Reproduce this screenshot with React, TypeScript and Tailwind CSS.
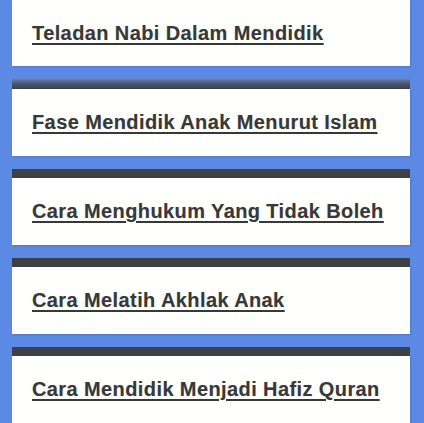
import React from "react";

const titles = [
  "Teladan Nabi Dalam Mendidik",
  "Fase Mendidik Anak Menurut Islam",
  "Cara Menghukum Yang Tidak Boleh",
  "Cara Melatih Akhlak Anak",
  "Cara Mendidik Menjadi Hafiz Quran",
];

function Card({ title, index }: { title: string; index: number }) {
  return (
    <div className={`flex flex-col ${index === 1 ? "-mt-[1px]" : ""}`}>
      {index === 1 && (
        <div className="h-[11px] bg-gradient-to-b from-[#6a8ad0] via-[#4a5670] to-[#3c4046]" />
      )}
      {index > 1 && <div className="h-[9px] bg-[#3d4146]" />}
      <div
        className={`flex items-center bg-[#fffffd] px-5 pb-[1px] shadow-[1px_1px_2px_rgba(0,0,0,0.12)] ${
          index === 0 ? "h-[66px]" : "h-[67px]"
        }`}
      >
        <a
          href="#"
          className="text-[20px] font-bold leading-none tracking-[0.4px] text-[#383838] underline decoration-[1.5px] underline-offset-[3px] [text-shadow:0_0_1px_rgba(0,0,0,0.2)]"
          style={{ fontFamily: '"Liberation Sans", Arial, sans-serif' }}
        >
          {title}
        </a>
      </div>
    </div>
  );
}

export default function App() {
  return (
    <div className="min-h-[423px] w-[424px] overflow-hidden bg-[#5b89e3] pl-[12px] pr-[14px]">
      <div className="flex flex-col gap-[13px]">
        {titles.map((t, i) => (
          <Card key={t} title={t} index={i} />
        ))}
      </div>
    </div>
  );
}
